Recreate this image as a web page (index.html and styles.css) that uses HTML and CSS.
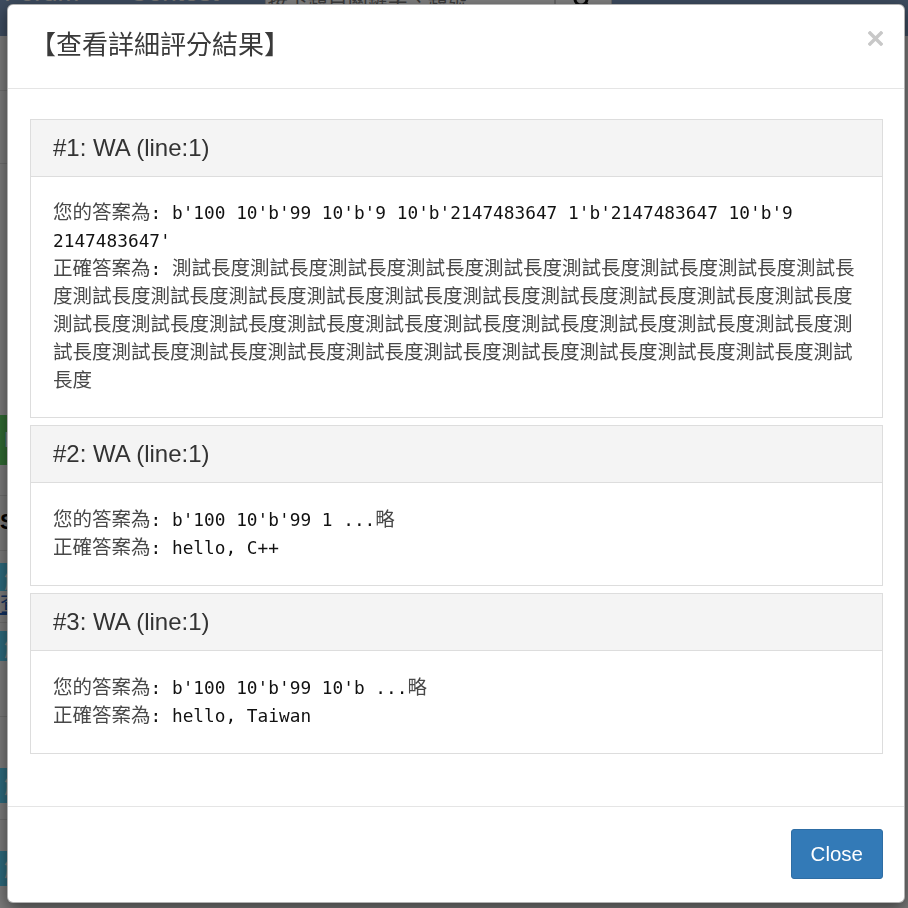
FILE: index.html
```html
<!DOCTYPE html>
<html lang="zh-Hant">
<head>
  <meta charset="UTF-8">
  <meta name="viewport" content="width=device-width, initial-scale=1.0">
  <title>查看詳細評分結果</title>
  <link rel="stylesheet" href="styles.css">
</head>

<body>
  <!-- page behind the dialog -->
  <div class="page">
    <div class="navbar">
      <a class="nav-link" href="#">Forum</a>
      <a class="nav-link" href="#">Contest</a>
      <div class="search">
        <input class="search-input" placeholder="按下題目關鍵字、題號...">
        <button class="search-btn">
          <svg width="22" height="22" viewBox="0 0 22 22"><circle cx="9" cy="9" r="6" fill="none" stroke="#111" stroke-width="3"/><path d="M13 13l6 6" stroke="#111" stroke-width="3.5"/></svg>
        </button>
      </div>
    </div>
    <div class="side">
      <div class="side-row r1"></div>
      <div class="side-row r2"></div>
      <div class="side-gap"></div>
      <div class="side-btn green">Run</div>
      <div class="side-row r3"></div>
      <div class="side-row r4"><b>Submit</b></div>
      <div class="side-btn teal t1">解</div>
      <div class="side-row r5"><a href="#">查看</a></div>
      <div class="side-btn teal t2">解</div>
      <div class="side-row r6"></div>
      <div class="side-btn teal t3">解</div>
      <div class="side-row r7"></div>
      <div class="side-btn teal t4">解</div>
    </div>
  </div>
  <div class="backdrop"></div>

  <div class="modal-wrap">
    <div class="modal">
      <div class="modal-header">
        <h4 class="modal-title">【查看詳細評分結果】</h4>
        <button class="close" aria-label="Close">
          <svg width="15" height="15" viewBox="0 0 15 15"><path d="M2 2L13 13M13 2L2 13" stroke="#c8c8c8" stroke-width="3.4" stroke-linecap="square"/></svg>
        </button>
      </div>

      <div class="modal-body">
        <div class="panel">
          <div class="panel-heading">#1: WA (line:1)</div>
          <div class="panel-body">
            <div><span class="zh">您的答案為</span>: b'100 10'b'99 10'b'9 10'b'2147483647 1'b'2147483647 10'b'9 2147483647'</div>
            <div><span class="zh">正確答案為</span>: <span class="zh">測試長度測試長度測試長度測試長度測試長度測試長度測試長度測試長度測試長度測試長度測試長度測試長度測試長度測試長度測試長度測試長度測試長度測試長度測試長度測試長度測試長度測試長度測試長度測試長度測試長度測試長度測試長度測試長度測試長度測試長度測試長度測試長度測試長度測試長度測試長度測試長度測試長度測試長度測試長度測試長度</span></div>
          </div>
        </div>

        <div class="panel">
          <div class="panel-heading">#2: WA (line:1)</div>
          <div class="panel-body short">
            <div><span class="zh">您的答案為</span>: b'100 10'b'99 1 ...<span class="zh">略</span></div>
            <div><span class="zh">正確答案為</span>: hello, C++</div>
          </div>
        </div>

        <div class="panel">
          <div class="panel-heading">#3: WA (line:1)</div>
          <div class="panel-body short">
            <div><span class="zh">您的答案為</span>: b'100 10'b'99 10'b ...<span class="zh">略</span></div>
            <div><span class="zh">正確答案為</span>: hello, Taiwan</div>
          </div>
        </div>
      </div>

      <div class="modal-footer">
        <button class="btn">Close</button>
      </div>
    </div>
  </div>
</body>
</html>
```

FILE: styles.css
```css
* {
  box-sizing: border-box;
}
body {
  margin: 0;
  height: 908px;
  overflow: hidden;
  font-family: "Liberation Sans", Arial, sans-serif;
  background-color: #f4f4f4;
}

/* background page */
.navbar {
  height: 36px;
  background-color: #7a97bd;
  display: flex;
  align-items: flex-start;
  overflow: hidden;
}
.nav-link {
  color: #e8e8e8;
  font-size: 26px;
  line-height: 26px;
  margin-top: -21px;
  margin-left: 4px;
  margin-right: 46px;
  text-decoration: none;
}
.search {
  display: flex;
  margin-top: -21px;
}
.search-input {
  width: 290px;
  height: 40px;
  border: 1px solid #ccc;
  background: #fff;
  font-size: 20px;
  font-family: "Noto Sans CJK TC", sans-serif;
}
.search-btn {
  width: 57px;
  height: 40px;
  border: 1px solid #ccc;
  background: #fff;
  display: flex;
  align-items: flex-end;
  justify-content: center;
  padding: 0 0 6px;
}
.side {
  width: 160px;
  display: flex;
  flex-direction: column;
  font-size: 22px;
}
.side-row {
  border-bottom: 1px solid #dadada;
  overflow: hidden;
}
.r1 { height: 55px; }
.r2 { height: 73px; }
.side-gap { height: 251px; }
.side-btn {
  color: #fff;
  overflow: hidden;
  padding-left: 4px;
}
.green {
  height: 50px;
  background-color: #5fd465;
  line-height: 50px;
}
.r3 { height: 31px; }
.r4 { height: 55px; line-height: 52px; }
.teal {
  background-color: #5ad2f8;
  font-family: "Noto Sans CJK TC", sans-serif;
  line-height: 30px;
}
.t1 { height: 28px; margin-top: 12px; }
.r5 { height: 32px; line-height: 20px; }
.r5 a { color: #2060c0; font-family: "Noto Sans CJK TC", sans-serif; }
.t2 { height: 30px; margin-top: 8px; }
.r6 { height: 56px; }
.t3 { height: 35px; margin-top: 51px; }
.r7 { height: 17px; }
.t4 { height: 35px; margin-top: 31px; }

.backdrop {
  position: fixed;
  inset: 0;
  background-color: rgba(0, 0, 0, 0.5);
}

/* dialog */
.modal-wrap {
  position: fixed;
  inset: 0;
  padding: 4px 0 0 7px;
}
.modal {
  width: 898px;
  background-color: #fff;
  border: 1px solid rgba(0, 0, 0, 0.3);
  border-radius: 6px;
  box-shadow: 0 5px 15px rgba(0, 0, 0, 0.5);
}
.modal-header {
  height: 84px;
  padding: 0 21px 8px 22px;
  border-bottom: 1px solid #e5e5e5;
  display: flex;
  align-items: center;
  justify-content: space-between;
}
.modal-title {
  margin: 0;
  font-family: "Noto Sans CJK TC", sans-serif;
  font-weight: 400;
  font-size: 26px;
  line-height: 32px;
  color: #3a3a3a;
}
.close {
  align-self: flex-start;
  margin-top: 26px;
  padding: 0;
  border: none;
  background: none;
  display: block;
  line-height: 0;
}
.modal-body {
  padding: 30px 21px 45px 22px;
}
.panel {
  border: 1px solid #ddd;
  margin-bottom: 7px;
}
.panel-heading {
  background-color: #f4f4f4;
  border-bottom: 1px solid #ddd;
  padding: 15px 22px;
  font-size: 24px;
  line-height: 26px;
  color: #333;
}
.panel-body {
  padding: 22px;
  font-family: "DejaVu Sans Mono", "Liberation Mono", monospace;
  font-size: 17.8px;
  line-height: 28px;
  color: #111;
}
.panel-body.short {
  padding-top: 23px;
  padding-bottom: 23px;
}
.zh {
  font-family: "Noto Sans CJK TC", sans-serif;
  font-size: 19.5px;
  line-height: 23px;
  color: #484848;
}
.modal-footer {
  border-top: 1px solid #e5e5e5;
  padding: 22px 21px 23px;
  text-align: right;
}
.btn {
  font-family: "Liberation Sans", Arial, sans-serif;
  font-size: 20.5px;
  line-height: 26px;
  padding: 11px 19px;
  color: #fff;
  background-color: #337ab7;
  border: 1px solid #2e6da4;
  border-radius: 3px;
  cursor: pointer;
}
```
